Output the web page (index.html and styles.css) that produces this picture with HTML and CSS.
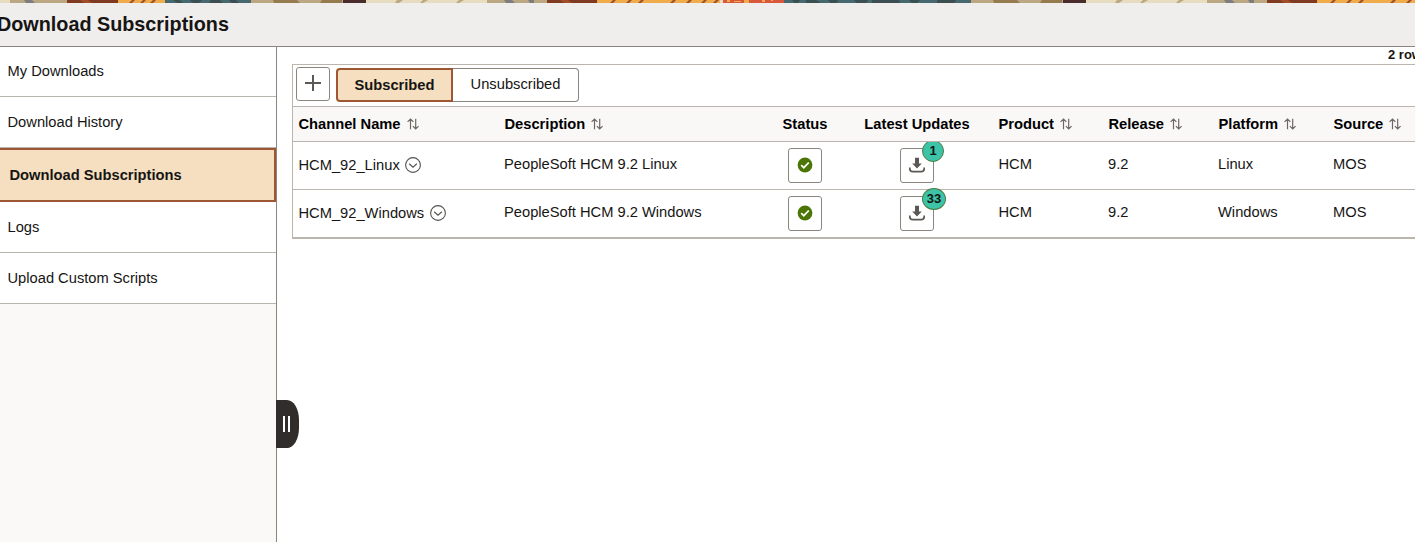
FILE: index.html
```
<!DOCTYPE html>
<html lang="en">
<head>
<meta charset="utf-8">
<title>Download Subscriptions</title>
<link rel="stylesheet" href="styles.css">
</head>
<body>
<svg class="defs" width="0" height="0" aria-hidden="true">
  <symbol id="sort" viewBox="0 0 12 12"><path d="M3.5 11.2V1M.6 3.9 3.5 1l2.9 2.9M8.7.8V11M5.9 8.1 8.7 11l2.9-2.9" fill="none" stroke="#6c6864" stroke-width="1.2"/></symbol>
  <symbol id="more" viewBox="0 0 16 16"><circle cx="8" cy="8" r="7.4" fill="none" stroke="#55524f" stroke-width="1.1"/><path d="M4.2 6.8 8 10.1l3.8-3.3" fill="none" stroke="#55524f" stroke-width="1.2"/></symbol>
  <symbol id="ok" viewBox="0 0 16 16"><circle cx="8" cy="8" r="7.4" fill="#4b7605"/><path d="M4.2 8.1 6.8 10.7l5-5.2" fill="none" stroke="#fff" stroke-width="1.8"/></symbol>
  <symbol id="download" viewBox="0 0 16 16"><path d="M6 .8h4v5.6h2.8L8 11.4 3.2 6.4H6z" fill="#5b5855"/><path d="M.8 10.6v1.2q0 2.9 2.9 2.9h8.6q2.9 0 2.9-2.9v-1.2" fill="none" stroke="#5b5855" stroke-width="1.7"/></symbol>
</svg>
<svg class="strip" width="1415" height="3" aria-hidden="true">
  <defs>
    <pattern id="banner" width="720" height="3" patternUnits="userSpaceOnUse">
      <path fill="#e7dcc0" d="M0 0h10v3H0zM366 0h121v3H366z"/>
      <path fill="#bca783" d="M10 0h57v3H10zM250 0h93v3h-93zM487 0h60v3h-60z"/>
      <path fill="#7f3a22" d="M67 0h51v3H67zM547 0h50v3h-50z"/>
      <path fill="#f0ac4b" d="M118 0h47v3h-47zM597 0h123v3H597z"/>
      <path fill="#3b4f52" d="M165 0h86v3h-86z"/>
      <path fill="#4a2c2b" d="M343 0h23v3h-23z"/>
      <path fill="#7d7d80" d="M24 0h8l3 3h-9zM504 0h8l3 3h-9zM528 0h6v3h-4z"/>
      <path fill="#a14e28" d="M80 0h8l4 3h-8zM560 0h8l4 3h-8zM132 0h3l-3 3h-3zM143 0h3l-3 3h-3zM153 0h3l-3 3h-3zM613 0h3l-3 3h-3zM629 0h3l-3 3h-3zM641 0h3l-3 3h-3zM673 0h3l-3 3h-3zM689 0h3l-3 3h-3zM704 0h3l-3 3h-3zM716 0h3l-3 3h-3z"/>
      <path fill="#45696f" d="M165 0h8l4 3h-12zM180 0h10l3 3h-10zM202 0h9l-2 3h-10zM220 0h9l3 3h-9zM236 0h15v3h-12z"/>
      <path fill="#967a50" d="M273 0h24l3 3h-26zM322 0h20v3h-22z"/>
      <path fill="#bca783" d="M397 0h6l-4 3h-4zM423 0h5l-5 3h-3zM459 0h5l-5 3h-3z"/>
    </pattern>
  </defs>
  <rect width="1415" height="3" fill="url(#banner)"/>
  <path fill="#d9573c" d="M723 0h61v3h-61z"/>
  <path fill="#f0ac4b" d="M727 0h3v2h-3zM734 1h7v1h-7zM744 0h5v3h-5zM762 0h3v2h-3zM771 0h2v1h-2z"/>
  <path fill="#3b4f52" d="M784 0h187v3H784z"/>
  <path fill="#45696f" d="M784 0h8l3 3h-11zM800 0h6v3h-8zM816 0h12l3 3h-10zM838 0h16l3 3h-20zM868 0h4v3h-6zM899 0h10l3 3h-12zM920 0h17v3h-20zM956 0h15v3h-17z"/>
</svg>
<header class="title-bar"><h1>Download Subscriptions</h1></header>
<div class="page">
  <nav class="sidebar">
    <a class="item first">My Downloads</a>
    <a class="item">Download History</a>
    <a class="item selected">Download Subscriptions</a>
    <a class="item">Logs</a>
    <a class="item">Upload Custom Scripts</a>
    <button class="handle" aria-label="Collapse"><i></i><i></i></button>
  </nav>
  <main class="content">
    <div class="row-count">2 rows</div>
    <section class="grid-box">
      <div class="toolbar">
        <button class="btn add" aria-label="Add"><svg width="18" height="18"><path d="M9 1v16M1 9h16" stroke="#5b5855" stroke-width="2"/></svg></button>
        <div class="tabs"><button class="tab on">Subscribed</button><button class="tab off">Unsubscribed</button></div>
      </div>
      <div class="row head">
        <div>Channel Name<svg class="sort"><use href="#sort"/></svg></div>
        <div>Description<svg class="sort"><use href="#sort"/></svg></div>
        <div class="center">Status</div>
        <div class="center">Latest Updates</div>
        <div class="product">Product<svg class="sort"><use href="#sort"/></svg></div>
        <div>Release<svg class="sort"><use href="#sort"/></svg></div>
        <div>Platform<svg class="sort"><use href="#sort"/></svg></div>
        <div>Source<svg class="sort"><use href="#sort"/></svg></div>
      </div>
      <div class="row">
        <div class="name">HCM_92_Linux<svg class="more"><use href="#more"/></svg></div>
        <div>PeopleSoft HCM 9.2 Linux</div>
        <div class="center"><button class="btn" aria-label="Active"><svg class="icon"><use href="#ok"/></svg></button></div>
        <div class="center clip"><button class="btn" aria-label="Download"><svg class="icon"><use href="#download"/></svg><span class="badge">1</span></button></div>
        <div class="product">HCM</div>
        <div>9.2</div>
        <div>Linux</div>
        <div>MOS</div>
      </div>
      <div class="row">
        <div class="name">HCM_92_Windows<svg class="more"><use href="#more"/></svg></div>
        <div>PeopleSoft HCM 9.2 Windows</div>
        <div class="center"><button class="btn" aria-label="Active"><svg class="icon"><use href="#ok"/></svg></button></div>
        <div class="center"><button class="btn" aria-label="Download"><svg class="icon"><use href="#download"/></svg><span class="badge wide">33</span></button></div>
        <div class="product">HCM</div>
        <div>9.2</div>
        <div>Windows</div>
        <div>MOS</div>
      </div>
    </section>
  </main>
</div>
</body>
</html>
```
FILE: styles.css
```
* { box-sizing: border-box; }
body {
  margin: 0;
  height: 542px;
  overflow: hidden;
  display: flex;
  flex-direction: column;
  background: #fff;
  color: #161513;
  font: 14.7px/18px "Liberation Sans", Arial, sans-serif;
}
svg { display: block; flex: none; }
.defs { position: absolute; }
button { font: inherit; color: inherit; padding: 0; margin: 0; }

.title-bar {
  flex: none;
  height: 44px;
  background: #f0eeec;
  border-bottom: 1px solid #8b8580;
  display: flex;
  align-items: center;
  padding-bottom: 2px;
}
h1 { margin: 0 0 0 -3px; font-size: 19.8px; line-height: 24px; }

.page { flex: 1; display: flex; min-height: 0; }
.sidebar {
  position: relative;
  flex: none;
  width: 277px;
  background: #faf9f8;
  border-right: 1px solid #8b8580;
}
.item {
  display: flex;
  align-items: center;
  height: 51px;
  padding-left: 7.5px;
  background: #fff;
  border-bottom: 1px solid #b8b5af;
}
.item.first { height: 50px; padding-bottom: 2px; }
.item.selected {
  height: 54px;
  padding-left: 9.5px;
  background: #f5dfc0;
  border: 2px solid #9e5633;
  border-left: 0;
  font-weight: bold;
}
.handle {
  position: absolute;
  left: 276px;
  top: 353px;
  width: 23px;
  height: 48px;
  border: 0;
  border-radius: 0 12px 12px 0 / 0 20px 20px 0;
  background: #312d2a;
  display: flex;
  align-items: center;
  justify-content: center;
  gap: 3px;
  padding-right: 2px;
}
.handle i { width: 2px; height: 16px; background: #fff; }

.content { flex: 1; min-width: 0; padding-left: 15px; overflow: hidden; }
.row-count {
  height: 17px;
  padding-left: 1096px;
  font-size: 13px;
  line-height: 16px;
  font-weight: bold;
  white-space: nowrap;
}
.grid-box {
  width: 1140px;
  border: 1px solid #bbb5ae;
  border-bottom-width: 2px;
}
.toolbar { display: flex; gap: 6px; height: 41px; padding: 2px 3px; }
.btn {
  position: relative;
  width: 34px;
  height: 35px;
  border: 1px solid #8b8580;
  border-radius: 3px;
  background: #fff;
  display: flex;
  align-items: center;
  justify-content: center;
}
.btn.add { height: 34px; padding-bottom: 2px; }
.tabs { display: flex; height: 34px; margin-top: 1px; }
.tab { background: #fff; }
.tab.on {
  width: 117px;
  background: #f5dfc0;
  border: 2px solid #9e5633;
  border-radius: 4px 0 0 4px;
  font-weight: bold;
}
.tab.off {
  width: 126px;
  border: 1px solid #8b8580;
  border-left: 0;
  border-radius: 0 4px 4px 0;
  padding-bottom: 2px;
}
.row {
  display: grid;
  grid-template-columns: 206px 266px 80px 144px 114px 110px 115px 1fr;
  height: 48px;
  border-top: 1px solid #bbb5ae;
}
.row > div { display: flex; align-items: center; padding: 0 0 3px 5px; white-space: nowrap; }
.row > .name { padding: 0 0 1px 5.5px; }
.row > .product { padding-left: 9.5px; }
.row > .center { justify-content: center; padding: 0 0 1px; }
.row > .clip { overflow: hidden; }
.row.head { height: 35px; background: #faf8f7; font-weight: bold; color: #000; }
.row.head > div, .row.head > .center { padding-bottom: 0; padding-top: 0; }
.row.head > div:not(.center):not(.product) { padding-left: 5.5px; }
.sort { width: 12px; height: 12px; margin-left: 6px; }
.more { width: 16px; height: 16px; margin-left: 5.5px; }
.icon { width: 16px; height: 16px; }
.badge {
  position: absolute;
  left: 21px;
  top: -9px;
  width: 22px;
  height: 22px;
  border: 1px solid #4d7c45;
  border-radius: 50%;
  background: #3dc3a7;
  font-size: 13px;
  line-height: 20px;
  font-weight: bold;
  text-align: center;
}
.badge.wide { width: 24px; }
```
